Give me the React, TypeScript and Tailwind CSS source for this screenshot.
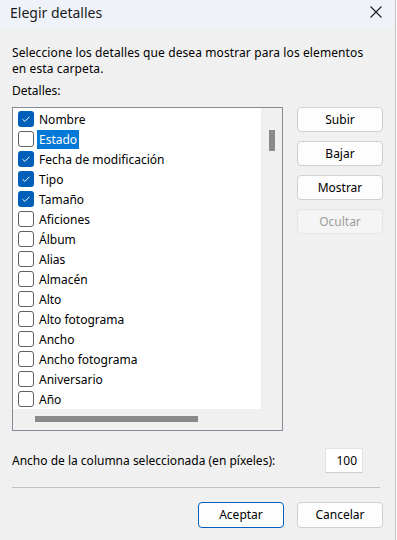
import React from 'react';

const items: { label: string; checked: boolean; selected?: boolean }[] = [
  { label: 'Nombre', checked: true },
  { label: 'Estado', checked: false, selected: true },
  { label: 'Fecha de modificación', checked: true },
  { label: 'Tipo', checked: true },
  { label: 'Tamaño', checked: true },
  { label: 'Aficiones', checked: false },
  { label: 'Álbum', checked: false },
  { label: 'Alias', checked: false },
  { label: 'Almacén', checked: false },
  { label: 'Alto', checked: false },
  { label: 'Alto fotograma', checked: false },
  { label: 'Ancho', checked: false },
  { label: 'Ancho fotograma', checked: false },
  { label: 'Aniversario', checked: false },
  { label: 'Año', checked: false },
];

function Checkbox({ checked }: { checked: boolean }) {
  if (checked) {
    return (
      <span className="w-4 h-4 rounded-[3px] bg-[#005fb8] flex items-center justify-center shrink-0">
        <svg width="16" height="16" viewBox="0 0 16 16" fill="none">
          <path d="M4.5 8.2 L6.8 10.4 L11.5 5.7" stroke="white" strokeWidth="1" />
        </svg>
      </span>
    );
  }
  return <span className="w-4 h-4 rounded-[3px] border border-[#616161] bg-white shrink-0" />;
}

function SideButton({ label, disabled }: { label: string; disabled?: boolean }) {
  return (
    <button
      className={`w-[86px] h-[25px] rounded-[4px] border text-[12px] ${
        disabled
          ? 'bg-[#f5f5f5] border-[#e5e5e5] text-[#9d9d9d]'
          : 'bg-[#fdfdfd] border-[#d0d0d0] text-black'
      }`}
    >
      {label}
    </button>
  );
}

export default function App() {
  return (
    <div
      className="w-[396px] h-[540px] bg-[#f0f0f0] border-r border-[#c4c4c4] flex flex-col text-black"
      style={{ fontFamily: '"Noto Sans", sans-serif' }}
    >
      {/* Title bar */}
      <div className="h-[28px] bg-[#eff3f9] flex items-center justify-between pl-[10px] pr-[13px]">
        <span className="text-[14px] text-[#1a1a1a] leading-none mt-[-2px]">Elegir detalles</span>
        <svg width="12" height="12" viewBox="0 0 12 12" className="mt-[-4px]">
          <path d="M0.5 0.5 L11.5 11.5 M11.5 0.5 L0.5 11.5" stroke="#1a1a1a" strokeWidth="1.1" />
        </svg>
      </div>

      <div className="flex flex-col pl-[12px] pr-[12px] text-[12px]">
        <p className="mt-[17px] leading-[16px] tracking-[0.1px]">
          Seleccione los detalles que desea mostrar para los elementos
          <br />
          en esta carpeta.
        </p>
        <p className="mt-[6px] leading-[16px]">Detalles:</p>

        <div className="mt-[8px] flex">
          {/* List box */}
          <div className="w-[271px] h-[324px] shrink-0 border border-[#868a96] flex flex-col">
            <div className="flex h-[301px]">
              <div className="w-[248px] bg-white pt-[1px]">
                {items.map((it) => (
                  <div key={it.label} className="h-[20px] flex items-center pl-[5px]">
                    <Checkbox checked={it.checked} />
                    <span
                      className={`ml-[3px] px-[2px] h-[19px] leading-[19px] whitespace-nowrap ${
                        it.selected ? 'bg-[#0078d7] text-white' : ''
                      }`}
                    >
                      {it.label}
                    </span>
                  </div>
                ))}
              </div>
              <div className="flex-1 bg-[#f0f0f0] flex justify-center">
                <div className="w-[6px] h-[21px] mt-[22px] bg-[#8a8a8a]" />
              </div>
            </div>
            <div className="flex-1 bg-[#f0f0f0] pl-[22px] pt-[7px]">
              <div className="w-[163px] h-[6px] bg-[#8a8a8a]" />
            </div>
          </div>

          {/* Side buttons */}
          <div className="ml-[14px] flex flex-col gap-[9px] shrink-0">
            <SideButton label="Subir" />
            <SideButton label="Bajar" />
            <SideButton label="Mostrar" />
            <SideButton label="Ocultar" disabled />
          </div>
        </div>

        <div className="mt-[17px] h-[25px] flex items-center">
          <span className="flex-1">Ancho de la columna seleccionada (en píxeles):</span>
          <div className="w-[38px] h-[25px] bg-white border border-[#e3e3e3] border-b-[#cfcfcf] mr-[20px] flex items-center justify-end pr-[5px]">
            100
          </div>
        </div>

        <div className="mt-[14px] h-px bg-[#c2c2c2] mr-[3px]" />

        <div className="mt-[14px] flex justify-end gap-[13px]">
          <button className="w-[86px] h-[26px] rounded-[4px] border border-[#005fb8] bg-[#fdfdfd] text-[12px]">
            Aceptar
          </button>
          <button className="w-[86px] h-[26px] rounded-[4px] border border-[#d0d0d0] bg-[#fdfdfd] text-[12px]">
            Cancelar
          </button>
        </div>
      </div>
    </div>
  );
}
